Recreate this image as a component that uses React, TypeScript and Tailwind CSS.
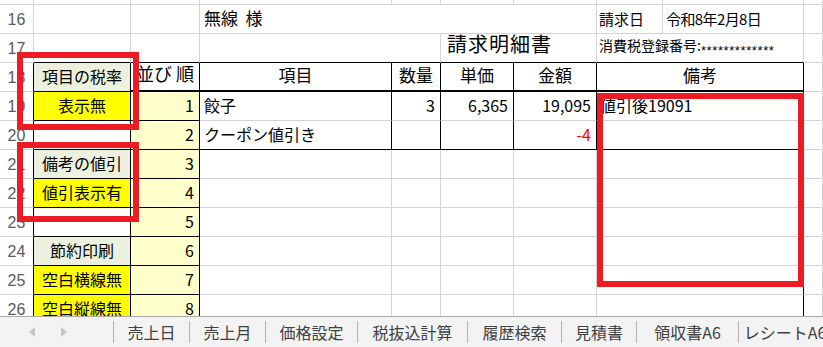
import React from "react";
import { twMerge } from "tailwind-merge";

const jp = "font-['Noto_Sans_CJK_JP',sans-serif]";

interface ICell {
  w: string;
  className?: string;
  children?: React.ReactNode;
}

// one spreadsheet cell: owns its right + bottom gridline
const Cell: React.FC<ICell> = ({ w, className = "", children }) => {
  return (
    <div
      className={twMerge(
        "shrink-0 h-full flex items-end pb-[3px] leading-none overflow-hidden whitespace-nowrap border-r border-b border-r-[#d4d4d4] border-b-[#d4d4d4] text-[16px] text-black",
        w,
        className
      )}
    >
      {children}
    </div>
  );
};

const RowHead: React.FC<{ n: number; dark?: boolean }> = ({ n, dark }) => (
  <Cell
    w="w-[34px]"
    className={twMerge(
      "justify-center pb-[1px] text-[16px] text-[#5a5a5a] font-['Liberation_Sans',sans-serif]",
      dark ? "border-r-black" : ""
    )}
  >
    {n}
  </Cell>
);

const sideRows = [
  { n: 21, label: "備考の値引", bg: "bg-[#ebf1de]", no: 3 },
  { n: 22, label: "値引表示有", bg: "bg-[#ffff00]", no: 4 },
  { n: 23, label: "", bg: "bg-white", no: 5 },
  { n: 24, label: "節約印刷", bg: "bg-[#ebf1de]", no: 6 },
  { n: 25, label: "空白横線無", bg: "bg-[#ffff00]", no: 7 },
  { n: 26, label: "空白縦線無", bg: "bg-[#ffff00]", no: 8 },
];

const tabs = [
  { name: "売上日", w: "w-[75px]" },
  { name: "売上月", w: "w-[75px]" },
  { name: "価格設定", w: "w-[91px]" },
  { name: "税抜込計算", w: "w-[109px]" },
  { name: "履歴検索", w: "w-[93px]" },
  { name: "見積書", w: "w-[74px]" },
  { name: "領収書A6", w: "w-[101px]" },
  { name: "レシートA6", w: "w-[92px]" },
];

const Sheet = () => {
  const black = "border-r-black border-b-black";
  const hdr = "justify-center text-[17px] border-r-black border-b-black border-b-2";
  const num = "justify-end pr-[5px]";

  return (
    <div className="h-[316px] overflow-hidden">
      <div className="-mt-[24px]">
        {/* row 15 */}
        <div className="flex h-[29px]">
          <RowHead n={15} />
          <Cell w="w-[97px]" />
          <Cell w="w-[69px]" />
          <Cell w="w-[192px]" />
          <Cell w="w-[49px]" />
          <Cell w="w-[73px]" />
          <Cell w="w-[83px]" />
          <Cell w="w-[66px]" />
          <Cell w="w-[141px]" />
          <Cell w="w-[19px]" />
        </div>

        {/* row 16 */}
        <div className="flex h-[29px]">
          <RowHead n={16} />
          <Cell w="w-[97px]" />
          <Cell w="w-[69px]" />
          <Cell w="w-[397px]" className="pl-[4px] text-[17px] whitespace-pre">
            無線  様
          </Cell>
          <Cell w="w-[66px]" className="pl-[2px] text-[15px]">
            請求日
          </Cell>
          <Cell w="w-[141px]" className="pl-[3px] text-[15px] tracking-[-0.6px]">
            令和8年2月8日
          </Cell>
          <Cell w="w-[19px]" />
        </div>

        {/* row 17 */}
        <div className="flex h-[29px]">
          <RowHead n={17} />
          <Cell w="w-[97px]" className="border-b-black" />
          <Cell w="w-[69px]" className="border-b-black" />
          <Cell w="w-[241px]" className="border-b-black" />
          <Cell w="w-[156px]" className="pl-[6px] text-[20px] pb-[3px] tracking-[1px] border-b-black">
            請求明細書
          </Cell>
          <Cell w="w-[207px]" className="pl-[2px] text-[14px] pb-[6px] border-b-black">
            消費税登録番号:
            <span className="inline-block translate-y-[4px] text-[13px] tracking-[0.6px] font-['Liberation_Sans',sans-serif]">
              *************
            </span>
          </Cell>
          <Cell w="w-[19px]" />
        </div>

        {/* row 18: table head */}
        <div className="flex h-[29px]">
          <RowHead n={18} dark />
          <Cell w="w-[97px]" className={twMerge("justify-center bg-[#ebf1de]", black)}>
            項目の税率
          </Cell>
          <Cell w="w-[69px]" className="justify-end pr-[5px] text-[18px] whitespace-pre border-r-black border-b-black border-b-2">
            並び 順
          </Cell>
          <Cell w="w-[192px]" className={hdr}>
            項目
          </Cell>
          <Cell w="w-[49px]" className={hdr}>
            数量
          </Cell>
          <Cell w="w-[73px]" className={hdr}>
            単価
          </Cell>
          <Cell w="w-[83px]" className={hdr}>
            金額
          </Cell>
          <Cell w="w-[207px]" className={hdr}>
            備考
          </Cell>
          <Cell w="w-[19px]" />
        </div>

        {/* row 19 */}
        <div className="flex h-[29px]">
          <RowHead n={19} dark />
          <Cell w="w-[97px]" className={twMerge("justify-center bg-[#ffff00]", black)}>
            表示無
          </Cell>
          <Cell w="w-[69px]" className={twMerge(num, "bg-[#ffffcc]", black)}>
            1
          </Cell>
          <Cell w="w-[192px]" className="pl-[4px] border-r-black">
            餃子
          </Cell>
          <Cell w="w-[49px]" className={twMerge(num, "border-r-black")}>
            3
          </Cell>
          <Cell w="w-[73px]" className={twMerge(num, "border-r-black")}>
            6,365
          </Cell>
          <Cell w="w-[83px]" className={twMerge(num, "border-r-black")}>
            19,095
          </Cell>
          <Cell w="w-[207px]" className="pl-[3px] border-r-black">
            値引後19091
          </Cell>
          <Cell w="w-[19px]" />
        </div>

        {/* row 20 */}
        <div className="flex h-[29px]">
          <RowHead n={20} dark />
          <Cell w="w-[97px]" className={black} />
          <Cell w="w-[69px]" className={twMerge(num, "bg-[#ffffcc]", black)}>
            2
          </Cell>
          <Cell w="w-[192px]" className={twMerge("pl-[4px]", black)}>
            クーポン値引き
          </Cell>
          <Cell w="w-[49px]" className={black} />
          <Cell w="w-[73px]" className={black} />
          <Cell w="w-[83px]" className={twMerge(num, "text-[#ff0000]", black)}>
            -4
          </Cell>
          <Cell w="w-[207px]" className={black} />
          <Cell w="w-[19px]" />
        </div>

        {sideRows.map((r) => (
          <div key={r.n} className="flex h-[29px]">
            <RowHead n={r.n} dark />
            <Cell w="w-[97px]" className={twMerge("justify-center", r.bg, black)}>
              {r.label}
            </Cell>
            <Cell w="w-[69px]" className={twMerge(num, "bg-[#ffffcc]", black)}>
              {r.no}
            </Cell>
            <Cell w="w-[192px]" />
            <Cell w="w-[49px]" />
            <Cell w="w-[73px]" />
            <Cell w="w-[83px]" />
            <Cell w="w-[207px]" className="border-r-black" />
            <Cell w="w-[19px]" />
          </div>
        ))}
      </div>
    </div>
  );
};

const TabBar = () => (
  <div className="h-[31px] flex items-center bg-[#f3f3f3] border-t border-[#ababab]">
    <div className="w-[113px] shrink-0 flex items-center h-full">
      <svg width="6" height="10" viewBox="0 0 6 10" className="ml-[29px]">
        <polygon points="6,0 0,5 6,10" fill="#c4c4c4" />
      </svg>
      <svg width="6" height="10" viewBox="0 0 6 10" className="ml-[26px]">
        <polygon points="0,0 6,5 0,10" fill="#c4c4c4" />
      </svg>
    </div>
    {tabs.map((t) => (
      <React.Fragment key={t.name}>
        <div className="w-px h-[22px] bg-[#b4b4b4] shrink-0" />
        <div
          className={`${t.w} shrink-0 h-full flex items-center justify-center text-[16px] text-[#404040] whitespace-nowrap`}
        >
          {t.name}
        </div>
      </React.Fragment>
    ))}
  </div>
);

const App: React.FC = () => {
  return (
    <div className={`relative w-[823px] h-[347px] overflow-hidden bg-white ${jp}`}>
      <Sheet />
      <TabBar />

      {/* red annotation frames */}
      <div className="absolute left-[17px] top-[52px] w-[122px] h-[78px] border-[6px] border-[#ed1c24]" />
      <div className="absolute left-[17px] top-[142px] w-[122px] h-[80px] border-[6px] border-[#ed1c24]" />
      <div className="absolute left-[597px] top-[93px] w-[207px] h-[194px] border-[6px] border-[#ed1c24]" />
    </div>
  );
};

export default App;
